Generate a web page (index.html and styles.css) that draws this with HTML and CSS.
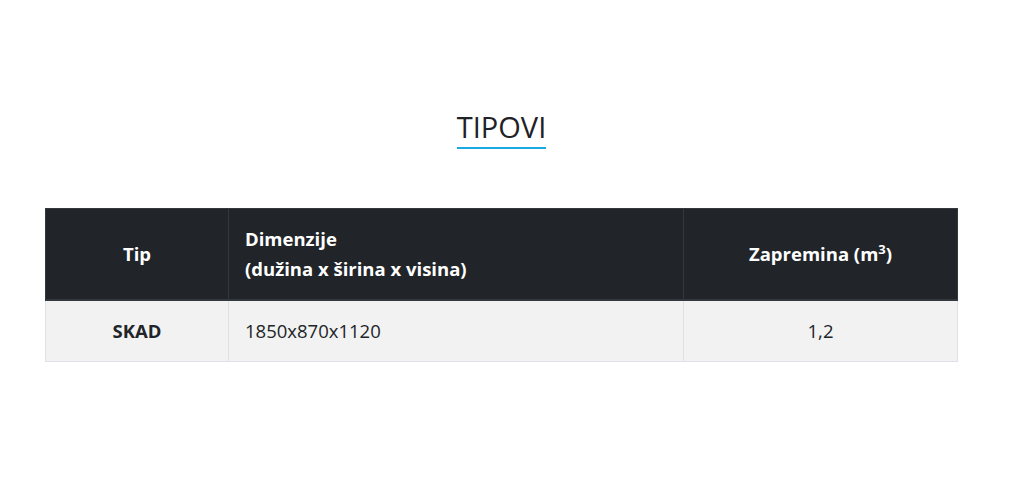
FILE: index.html
```html
<!DOCTYPE html>
<html lang="sr">
<head>
    <meta charset="UTF-8">
    <meta name="viewport" content="width=device-width, initial-scale=1.0">
    <link rel="stylesheet" href="styles.css">
</head>
<body>
    <div class="container">
        <div class="title-wrap">
            <h2 class="section-title">TIPOVI</h2>
        </div>
        <table class="types-table">
            <thead>
                <tr>
                    <th class="col-tip">Tip</th>
                    <th class="col-dim">Dimenzije<br>(dužina x širina x visina)</th>
                    <th class="col-vol">Zapremina (m<sup>3</sup>)</th>
                </tr>
            </thead>
            <tbody>
                <tr>
                    <td class="col-tip"><strong>SKAD</strong></td>
                    <td class="col-dim">1850x870x1120</td>
                    <td class="col-vol">1,2</td>
                </tr>
            </tbody>
        </table>
    </div>
</body>
</html>
```

FILE: styles.css
```css
body {
    margin: 0;
    padding: 0;
    background-color: #fff;
    font-family: "Open Sans", "Noto Sans", sans-serif;
    color: #212529;
}

.container {
    width: 913px;
    margin: 0 0 0 45px;
    padding-top: 107px;
}

.title-wrap {
    text-align: center;
    margin-bottom: 59px;
}

.section-title {
    display: inline-block;
    margin: 0;
    font-size: 29px;
    font-weight: 400;
    line-height: 40px;
    color: #1f2226;
    border-bottom: 2px solid #1ba9e1;
}

.types-table {
    width: 100%;
    border-collapse: collapse;
    font-size: 18.5px;
}

.types-table th,
.types-table td {
    padding: 15px 16px;
    line-height: 30px;
    vertical-align: middle;
}

.types-table th {
    background-color: #212529;
    color: #fff;
    font-weight: 700;
    border: 1px solid #32383e;
    border-bottom: 2px solid #32383e;
}

.types-table td {
    background-color: #f2f2f2;
    border: 1px solid #dee2e6;
}

.col-tip {
    width: 150px;
    text-align: center;
}

.col-dim {
    width: 422px;
    text-align: left;
}

.col-vol {
    text-align: center;
}

.types-table sup {
    font-size: 13px;
    line-height: 0;
}
```
